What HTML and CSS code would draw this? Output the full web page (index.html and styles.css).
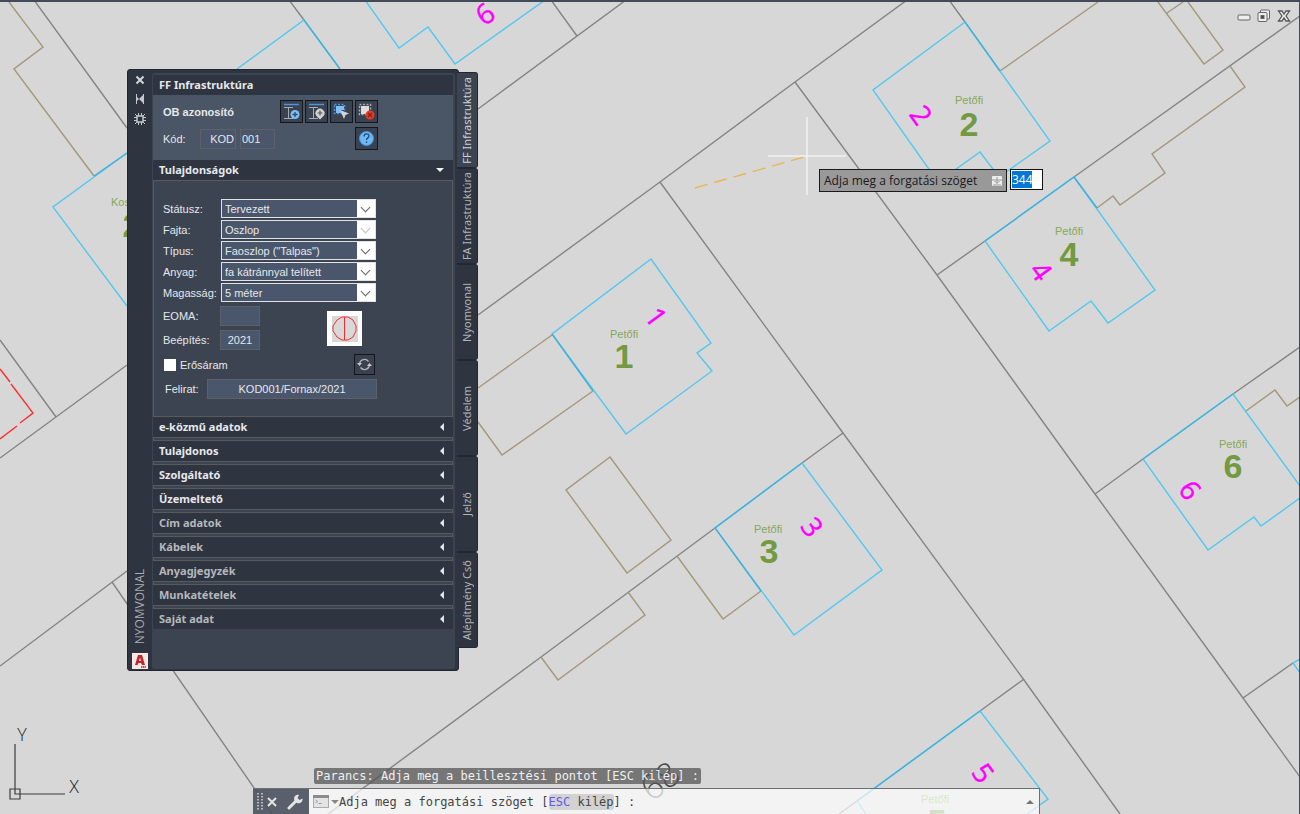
FILE: index.html
```html
<!DOCTYPE html>
<html lang="hu">
<head>
    <meta charset="UTF-8">
    <title>FF Infrastruktúra</title>
    <link rel="stylesheet" href="styles.css">
</head>
<body>

<main class="workspace">

    <!-- Map drawing -->
    <svg class="drawing" viewBox="0 0 1300 814" preserveAspectRatio="xMinYMin slice">
        <!-- Parcel borders -->
        <g class="parcel">
            <path d="M34 0L127 128M289 0L304 20M551 0L577 36M626 0L478 109"/>
            <path d="M0 340L56 417M0 458L127 365M0 666L127 571M112 582L272 814"/>
            <path d="M478 315L660 182L795 82L907 0M949 0L965 22"/>
            <path d="M660 182L843 433L1024 680L1120 814"/>
            <path d="M795 82L937 275L1095 494L1243 698L1300 777"/>
            <path d="M937 275L985 241M1074 177L1300 16"/>
            <path d="M843 433L802 463M715 528L541 657L328 814"/>
            <path d="M1095 494L1143 459M1233 394L1300 347"/>
            <path d="M1243 698L1293 663M1024 679L980 711M857 801L839 814"/>
        </g>

        <!-- Outbuildings -->
        <g class="annex">
            <path d="M9 2L43 47L14 69L94 176"/>
            <path d="M1000 71L1098 2M1158 2L1204 64L1223 50L1188 2M1167 13L1183 2"/>
            <path d="M1230 66L1245 87L1152 154L1165 173L1120 205L1113 196L1097 208"/>
            <path d="M1246 411L1275 390L1287 406L1300 397"/>
            <path d="M552 335L478 388M593 391L502 455L478 422"/>
            <path d="M610 457L566 490L627 573L671 540Z"/>
            <path d="M677 556L723 619L761 591M628 592L645 615L558 680L541 657"/>
        </g>

        <!-- Houses -->
        <g class="house">
            <path d="M127 153L53 207L127 306M237 69L304 20L340 69"/>
            <path d="M365 0L399 48L428 27L455 64L545 0"/>
            <path d="M965 22L873 90L938 182L980 152L999 177L1050 141Z"/>
            <path d="M1074 177L1155 290L1108 323L1091 301L1049 331L985 241Z"/>
            <path d="M1300 486L1233 394L1143 459L1208 550L1254 517L1261 526L1300 498"/>
            <path d="M651 259L711 343L697 353L712 371L626 434L552 334Z"/>
            <path d="M802 463L882 570L794 635L715 528Z"/>
            <path d="M866 814L857 801L980 711L1048 799L1027 814"/>
            <path d="M1300 659L1293 663L1300 673"/>
        </g>
        <g class="house-edge">
            <path d="M127 153L94 176M304 20L340 69M965 22L1000 71M985 241L1074 177L1097 208"/>
            <path d="M552 334L593 391M802 463L715 528L761 591M1143 459L1233 394M980 711L857 801"/>
        </g>
        <path class="warning" d="M0 369L10 382M11 384L33 413L20 423M17 426L0 439"/>

        <!-- Street names and house numbers -->
        <g class="street">
            <text x="111" y="206">Kossuth</text>
            <text x="955" y="104">Petőfi</text>
            <text x="1055" y="235">Petőfi</text>
            <text x="1219" y="448">Petőfi</text>
            <text x="610" y="338">Petőfi</text>
            <text x="754" y="533">Petőfi</text>
            <text x="921" y="803">Petőfi</text>
        </g>
        <g class="number">
            <text x="132" y="237">2</text>
            <text x="969" y="136">2</text>
            <text x="1069" y="266">4</text>
            <text x="1233" y="478">6</text>
            <text x="624" y="368">1</text>
            <text x="769" y="563">3</text>
            <text x="937" y="833">5</text>
        </g>
        <g class="lot">
            <text transform="translate(485 14) rotate(-36)" y="10">6</text>
            <text transform="translate(921 115) rotate(54)" y="10">2</text>
            <text transform="translate(1041 271) rotate(54)" y="10">4</text>
            <text transform="translate(1190 490) rotate(54)" y="10">6</text>
            <text transform="translate(656 317) rotate(54)" y="10">1</text>
            <text transform="translate(812 527) rotate(54)" y="10">3</text>
            <text transform="translate(983 773) rotate(54)" y="10">5</text>
        </g>
        <text class="parcel-number" transform="translate(660 781) rotate(-37)" y="12">68</text>

        <!-- Rotation rubber band and crosshair -->
        <path class="rubber" d="M695 188L804 157"/>
        <path class="crosshair" d="M768 156H846M807 117V195"/>

        <!-- UCS icon -->
        <path class="ucs" d="M10 789h10v10h-10zM15 744V794H65"/>
        <text class="ucs-label" x="22" y="741">Y</text>
        <text class="ucs-label" x="74" y="793">X</text>
    </svg>

    <!-- Drawing window buttons -->
    <div class="window-buttons">
        <button type="button" aria-label="Kis méret">
            <svg width="14" height="14" viewBox="0 0 14 14"><rect x="1" y="6" width="12" height="5" rx="1" fill="#eee" stroke="#666"/></svg>
        </button>
        <button type="button" aria-label="Előző méret">
            <svg width="14" height="14" viewBox="0 0 14 14" fill="#eee" stroke="#666"><rect x="3.500" y="1" width="9" height="9" rx="1"/><rect x="1" y="3.500" width="9" height="9" rx="1"/><rect x="4" y="6.500" width="3" height="3" fill="#444"/></svg>
        </button>
        <button type="button" aria-label="Bezárás">
            <svg width="14" height="14" viewBox="0 0 14 14"><path d="M1.500 2h3.500l2 3 2-3h3.500L9 7l3.500 5H9L7 9l-2 3H1.500L5 7z" fill="#eee" stroke="#555" stroke-width="1.300"/></svg>
        </button>
    </div>

    <!-- Dynamic input -->
    <div class="dynamic-input">
        <label class="prompt" for="angle">Adja meg a forgatási szöget
            <svg width="10" height="10" viewBox="0 0 10 10"><rect width="10" height="10" rx="1" fill="#eee"/><path d="M5 1v6M2.500 5L5 7.500 7.500 5M1 9h8M0 4h10" fill="none" stroke="#999"/></svg>
        </label>
        <input class="angle" id="angle" type="text" value="344">
    </div>

    <!-- Palette -->
    <aside class="palette">
        <div class="palette-window">
            <div class="palette-strip">
                <button type="button" aria-label="Bezárás">
                    <svg width="10" height="10" viewBox="0 0 10 10"><path d="M1.500 1.500l7 7M8.500 1.500l-7 7" stroke="#d4d6da" stroke-width="2"/></svg>
                </button>
                <button type="button" aria-label="Automatikus elrejtés">
                    <svg width="10" height="10" viewBox="0 0 10 10" fill="#c4c7cc"><path d="M1 0h1v10H1zM2 3l2 2-2 2zM8 0h1v10H8zM8 1v8L4 5z"/></svg>
                </button>
                <button type="button" aria-label="Tulajdonságok">
                    <svg width="12" height="12" viewBox="0 0 12 12" fill="none" stroke="#c4c7cc"><rect x="3" y="3" width="6" height="6" stroke-width="1.500"/><path d="M4.500 0v3M7.500 0v3M4.500 9v3M7.500 9v3M0 4.500h3M0 7.500h3M9 4.500h3M9 7.500h3M1 1l2 2M11 1L9 3M1 11l2-2M11 11L9 9"/></svg>
                </button>
                <span class="palette-name">NYOMVONAL</span>
                <svg class="app-logo" width="16" height="16" viewBox="0 0 16 16"><rect width="16" height="16" fill="#f7e9e6"/><path d="M3 12L6 2h4l3 10h-3l-1-2H6.500L5.500 12zM7 8h2L8 4.500z" fill="#c1272d" fill-rule="evenodd"/><path d="M9 14h5" stroke="#e04040" stroke-width="2" stroke-dasharray="1.300 .5"/></svg>
            </div>

            <div class="palette-content">
                <h2 class="section-title">FF Infrastruktúra</h2>
                <div class="identifier">
                    <div class="id-row">
                        <strong>OB azonosító</strong>
                        <div class="tools">
                            <button class="tool" type="button" aria-label="Oszlop hozzáadása">
                                <svg width="19" height="19" viewBox="0 0 19 19"><path d="M2 2.500h15" stroke="#4a96e0" stroke-width="1.500"/><path d="M2 5.500h9M2 16.500h9M6.500 5.500v11" stroke="#a8abb0" fill="none"/><circle cx="13" cy="12.500" r="4.500" fill="#7cc0f5"/><path d="M13 10v5M10.500 12.500h5" stroke="#2b4a68" stroke-width="1.300"/></svg>
                            </button>
                            <button class="tool" type="button" aria-label="Oszlop helye">
                                <svg width="19" height="19" viewBox="0 0 19 19"><path d="M2 2.500h15" stroke="#4a96e0" stroke-width="1.500"/><path d="M2 5.500h9M2 16.500h9M6.500 5.500v11" stroke="#a8abb0" fill="none"/><path d="M13 17.500l-3.500-3.500a4.500 4.500 0 1 1 7 0z" fill="#d4d4d4"/><path d="M13 8.500v5M10.500 11h5" stroke="#555" stroke-width="1.200"/></svg>
                            </button>
                            <button class="tool" type="button" aria-label="Kiválasztás">
                                <svg width="19" height="19" viewBox="0 0 19 19"><rect x="2.500" y="2.500" width="10" height="9" fill="none" stroke="#4a96e0" stroke-width="1.500" stroke-dasharray="2 1.500"/><path d="M4 4h8v4H9v3H4z" fill="#7cc0f5"/><path d="M8 8l9 3.500-3.500 1.500L12 17z" fill="#d4d4d4"/></svg>
                            </button>
                            <button class="tool" type="button" aria-label="Kiválasztás törlése">
                                <svg width="19" height="19" viewBox="0 0 19 19"><rect x="2.500" y="2.500" width="11" height="10" fill="none" stroke="#aaa" stroke-width="1.500" stroke-dasharray="2 1.500"/><path d="M4 4h8v5l-3 3H4z" fill="#dcdcdc"/><circle cx="13" cy="13" r="4.500" fill="#e03c28"/><path d="M11 11l4 4M15 11l-4 4" stroke="#8c2012" stroke-width="1.300"/></svg>
                            </button>
                        </div>
                    </div>
                    <div class="id-row">
                        <label for="code">Kód:</label>
                        <input class="field code" id="code" type="text" value="KOD">
                        <input class="field serial" type="text" value="001" aria-label="Sorszám">
                        <button class="tool help" type="button" aria-label="Súgó">
                            <svg width="19" height="19" viewBox="0 0 19 19"><circle cx="9.500" cy="9.500" r="7" fill="#6cb8f8" stroke="#4a90d8"/><path d="M7 7.500c0-3.500 5-3.500 5-.5 0 2-2.500 1.800-2.500 4M9.500 12.500v1.500" fill="none" stroke="#234a70" stroke-width="1.300"/></svg>
                        </button>
                    </div>
                </div>

                <h2 class="section-title">Tulajdonságok<i class="arrow-down"></i></h2>
                <form class="properties">
                    <div class="combo-rows">
                        <div class="combo-row">
                            <label for="status">Státusz:</label>
                            <span class="combo"><select id="status"><option>Tervezett</option></select></span>
                        </div>
                        <div class="combo-row">
                            <label for="kind">Fajta:</label>
                            <span class="combo locked"><select id="kind"><option>Oszlop</option></select></span>
                        </div>
                        <div class="combo-row">
                            <label for="type">Típus:</label>
                            <span class="combo"><select id="type"><option>Faoszlop ("Talpas")</option></select></span>
                        </div>
                        <div class="combo-row">
                            <label for="material">Anyag:</label>
                            <span class="combo"><select id="material"><option>fa kátránnyal telített</option></select></span>
                        </div>
                        <div class="combo-row">
                            <label for="height">Magasság:</label>
                            <span class="combo"><select id="height"><option>5 méter</option></select></span>
                        </div>
                    </div>

                    <div class="fields">
                        <div class="field-rows">
                            <div class="field-row">
                                <label for="eoma">EOMA:</label>
                                <input class="field" id="eoma" type="text">
                            </div>
                            <div class="field-row">
                                <label for="built">Beépítés:</label>
                                <input class="field" id="built" type="text" value="2021">
                            </div>
                        </div>
                        <svg class="symbol" width="35" height="35" viewBox="0 0 35 35"><rect width="35" height="35" fill="#fff"/><rect x="5" y="5" width="26" height="26" fill="#d8d8d8"/><path d="M15 6h6l5 3 3 6v5l-3 6-5 3h-6l-5-3-4-6v-5l4-6zM17.500 6v23" fill="none" stroke="#f03030"/></svg>
                    </div>

                    <div class="power-row">
                        <input class="check" id="power" type="checkbox">
                        <label for="power">Erősáram</label>
                        <button class="tool refresh" type="button" aria-label="Frissítés">
                            <svg width="15" height="15" viewBox="0 0 15 15"><path d="M2.500 7a5 5 0 0 1 9-2.500M12.500 8a5 5 0 0 1-9 2.500" fill="none" stroke="#b0b3b8" stroke-width="1.300"/><path d="M0 6h5L2.500 9zM10 9h5l-2.500-3z" fill="#c8cace"/></svg>
                        </button>
                    </div>

                    <div class="caption-row">
                        <label for="caption">Felirat:</label>
                        <input class="field" id="caption" type="text" value="KOD001/Fornax/2021">
                    </div>
                </form>

                <!-- Collapsed sections -->
                <h2 class="section-title">e-közmű adatok<i class="arrow-left"></i></h2>
                <div class="closed"></div>
                <h2 class="section-title">Tulajdonos<i class="arrow-left"></i></h2>
                <div class="closed"></div>
                <h2 class="section-title">Szolgáltató<i class="arrow-left"></i></h2>
                <div class="closed"></div>
                <h2 class="section-title">Üzemeltető<i class="arrow-left"></i></h2>
                <div class="closed"></div>
                <h2 class="section-title dim">Cím adatok<i class="arrow-left"></i></h2>
                <div class="closed"></div>
                <h2 class="section-title dim">Kábelek<i class="arrow-left"></i></h2>
                <div class="closed"></div>
                <h2 class="section-title dim">Anyagjegyzék<i class="arrow-left"></i></h2>
                <div class="closed"></div>
                <h2 class="section-title dim">Munkatételek<i class="arrow-left"></i></h2>
                <div class="closed"></div>
                <h2 class="section-title dim">Saját adat<i class="arrow-left"></i></h2>
            </div>
        </div>

        <nav class="palette-tabs">
            <button class="tab active" type="button"><span>FF Infrastruktúra</span></button>
            <button class="tab" type="button"><span>FA Infrastruktúra</span></button>
            <button class="tab" type="button"><span>Nyomvonal</span></button>
            <button class="tab" type="button"><span>Védelem</span></button>
            <button class="tab" type="button"><span>Jelző</span></button>
            <button class="tab" type="button"><span>Alépítmény Cső</span></button>
        </nav>
    </aside>

    <!-- Command line -->
    <div class="command">
        <div class="history">Parancs: Adja meg a beillesztési pontot [ESC kilép] :</div>
        <div class="command-bar">
            <div class="command-tools">
                <svg width="6" height="18" viewBox="0 0 6 18"><path d="M1 0v18M5 0v18" stroke="#d8d8d8" stroke-width="1.500" stroke-dasharray="1.500 1.500"/></svg>
                <button type="button" aria-label="Bezárás">
                    <svg width="10" height="10" viewBox="0 0 10 10"><path d="M1 1l8 8M9 1L1 9" stroke="#e4e4e4" stroke-width="2"/></svg>
                </button>
                <button type="button" aria-label="Testreszabás">
                    <svg width="16" height="16" viewBox="0 0 16 16"><path d="M2 14l7-7" stroke="#e4e4e4" stroke-width="3" stroke-linecap="round"/><path d="M12 1c-3-1-6 2-4.500 5.500L10 9c3 1 6-1 5.500-4.500L12.500 6 10.500 4z" fill="#e4e4e4"/></svg>
                </button>
            </div>
            <div class="command-line">
                <button type="button" aria-label="Legutóbbi parancsok">
                    <svg width="26" height="13" viewBox="0 0 26 13"><rect x=".5" y=".5" width="15" height="12" fill="#e4e4e4" stroke="#aaa"/><path d="M0 0h16v3H0z" fill="#8c8c8c"/><path d="M2.500 5l2 1.500-2 1.500M5.500 8.500h3" fill="none" stroke="#999"/><path d="M18 5h8l-4 4z" fill="#888"/></svg>
                </button>
                <span>Adja meg a forgatási szöget [<a class="option" href="#"><b>ESC</b> kilép</a>] :</span>
                <i class="arrow-up"></i>
            </div>
        </div>
    </div>
</main>

</body>
</html>
```
FILE: styles.css
```css
* {
    box-sizing: border-box;
}

body {
    margin: 0;
    font-family: "Liberation Sans", Arial, sans-serif;
    font-size: 11px;
    color: #e6e8eb;
}

button {
    display: flex;
    align-items: center;
    justify-content: center;
    padding: 0;
    border: 0;
    background: none;
    color: inherit;
}

.workspace {
    position: relative;
    height: 100vh;
    overflow: hidden;
    background: #d7d7d7;
    border-top: 2px solid #434b5a;
    border-right: 1px solid #434b5a;
}

/* Drawing */
.drawing {
    display: block;
    width: 100vw;
    height: 100vh;
    margin-top: -2px;
    fill: none;
}

.parcel {
    stroke: #848484;
}

.annex {
    stroke: #a4987a;
}

.house {
    stroke: #52c8f0;
}

.house-edge {
    stroke: #44b0d8;
}

.parcel,
.annex,
.house,
.house-edge {
    stroke-width: 1.4;
}

.warning {
    stroke: #ff2e2e;
    stroke-width: 1.4;
}

.street {
    font-size: 11px;
    fill: #86a859;
}

.number {
    font-size: 34px;
    font-weight: bold;
    fill: #739a41;
    text-anchor: middle;
}

.lot {
    font-family: "Open Sans", sans-serif;
    font-size: 28px;
    fill: #ff00ff;
    stroke: #ff00ff;
    stroke-width: 0.4;
    text-anchor: middle;
}

.parcel-number {
    font-family: "Open Sans", sans-serif;
    font-size: 34px;
    font-weight: 300;
    fill: #4a4a4a;
    text-anchor: middle;
}

.rubber {
    stroke: #e8b850;
    stroke-width: 1.4;
    stroke-dasharray: 13 7;
}

.crosshair {
    stroke: #f2f2f2;
    stroke-width: 1.5;
}

.ucs {
    stroke: #3c3c3c;
    stroke-width: 1.2;
}

.ucs-label {
    font-family: "Open Sans", sans-serif;
    font-size: 18px;
    font-weight: 300;
    fill: #222;
    text-anchor: middle;
}

.window-buttons {
    position: absolute;
    top: 7px;
    right: 8px;
    display: flex;
    gap: 6px;
}

/* Dynamic input */
.dynamic-input {
    position: absolute;
    top: 167px;
    left: 819px;
    display: flex;
    align-items: flex-start;
    gap: 3px;
    font-family: "Open Sans", sans-serif;
    font-size: 12px;
}

.prompt {
    display: flex;
    align-items: center;
    justify-content: space-between;
    width: 188px;
    height: 23px;
    padding: 0 4px;
    border: 1px solid #1a1a1a;
    background: #999;
    color: #1a1a1a;
}

.angle {
    width: 33px;
    height: 21px;
    padding: 0 1px;
    border: 1px solid #111;
    background: linear-gradient(#0078d7, #0078d7) 1px 1px / 20px 17px no-repeat #fff;
    color: #fff;
    font: inherit;
}

/* Palette */
.palette {
    position: absolute;
    top: 67px;
    left: 127px;
    display: flex;
    align-items: flex-start;
}

.palette-window {
    display: flex;
    width: 332px;
    min-height: 602px;
    padding: 3px 3px 1px 0;
    border: 1px solid #222733;
    border-radius: 3px;
    background: #2e3440;
}

.palette-strip {
    display: flex;
    flex-direction: column;
    align-items: center;
    gap: 9px;
    width: 24px;
    padding-top: 2px;
}

.palette-name {
    margin-top: auto;
    writing-mode: vertical-rl;
    transform: rotate(180deg);
    font-family: "Open Sans", sans-serif;
    font-size: 12px;
    line-height: 16px;
    color: #a9acb2;
}

.palette-content {
    flex: 1;
    padding: 2px 2px 0 1px;
    border-radius: 3px;
    background: #3c4452;
}

.section-title {
    display: flex;
    align-items: center;
    justify-content: space-between;
    height: 20px;
    margin: 0;
    padding: 0 9px 0 6px;
    background: #2e3440;
    font-family: "Noto Sans", sans-serif;
    font-size: 11px;
    font-weight: 700;
    line-height: 20px;
}

.dim {
    color: #b6b8bc;
}

.arrow-down {
    border: 4px solid transparent;
    border-top: 4px solid #f2f2f2;
    border-bottom: 0;
}

.arrow-left {
    border: 4px solid transparent;
    border-right: 4px solid #e6e6e6;
    border-left: 0;
}

.closed {
    height: 4px;
    border: 1px solid #585a5e;
}

.identifier {
    display: flex;
    flex-direction: column;
    gap: 4px;
    height: 65px;
    padding: 5px 75px 0 10px;
    background: #4a5565;
}

.id-row {
    display: flex;
    align-items: center;
    gap: 4px;
}

.id-row label {
    width: 33px;
}

.tools {
    display: flex;
    gap: 2px;
    margin-left: auto;
}

.tool {
    width: 23px;
    height: 23px;
    border: 1px solid #14171d;
    background: #3a4250;
}

.help {
    margin-left: auto;
}

.field {
    width: 40px;
    height: 20px;
    padding: 0 2px;
    border: 1px solid #5d6069;
    background: #4a566b;
    color: inherit;
    font: inherit;
    text-align: center;
}

.code {
    width: 36px;
    padding: 0 1px;
    text-align: right;
}

.serial {
    width: 35px;
    padding: 0 1px;
    text-align: left;
}

/* Properties form */
.properties {
    display: flex;
    flex-direction: column;
    gap: 4px;
    padding: 18px 75px 17px 9px;
    border: 1px solid #585a5e;
}

.combo-rows {
    display: flex;
    flex-direction: column;
    gap: 2px;
}

.combo-row,
.field-row,
.caption-row,
.power-row {
    display: flex;
    align-items: center;
}

.combo-row label {
    width: 58px;
    white-space: nowrap;
}

.combo {
    position: relative;
    display: flex;
    width: 155px;
    height: 19px;
    border: 1px solid #e2e2e2;
    background: #fff;
}

.combo select {
    flex: 1;
    appearance: none;
    margin: 0;
    padding: 0 19px 0 3px;
    border: 0;
    border-radius: 0;
    background: linear-gradient(90deg, #4a566b 135px, #fff 135px);
    color: inherit;
    font: inherit;
}

.combo::after {
    content: "";
    position: absolute;
    top: 4px;
    right: 6px;
    width: 6px;
    height: 6px;
    border: solid #666;
    border-width: 0 1px 1px 0;
    transform: rotate(45deg);
    pointer-events: none;
}

.locked::after {
    border-color: #c0c0c0;
}

.fields {
    display: flex;
    align-items: center;
    gap: 67px;
}

.field-rows {
    display: flex;
    flex-direction: column;
    gap: 4px;
}

.field-row label {
    width: 57px;
}

.power-row {
    gap: 4px;
}

.check {
    appearance: none;
    width: 12px;
    height: 12px;
    margin: 0 0 0 1px;
    background: #fff;
}

.refresh {
    width: 21px;
    height: 21px;
    margin: 0 2px 0 auto;
}

.caption-row {
    padding-left: 2px;
}

.caption-row label {
    width: 42px;
}

.caption-row .field {
    flex: 1;
}

/* Palette tabs */
.palette-tabs {
    margin: 3px 0 0 -2px;
}

.tab {
    width: 21px;
    height: 96px;
    border: 1px solid #222733;
    border-left: 0;
    border-radius: 0 3px 3px 0;
    background: #2e3440;
    font-family: "Noto Sans", sans-serif;
    font-size: 11px;
    color: #b0b3b8;
}

.tab span {
    writing-mode: vertical-rl;
    transform: rotate(180deg);
    line-height: 16px;
    white-space: nowrap;
}

.tab.active {
    background: #3c4452;
    color: #d0d2d6;
}

/* Command line */
.command {
    position: absolute;
    left: 253px;
    right: 259px;
    bottom: 0;
    display: flex;
    flex-direction: column;
    align-items: flex-start;
    gap: 4px;
    font-family: "DejaVu Sans Mono", monospace;
    font-size: 12px;
    white-space: pre;
}

.history {
    margin-left: 61px;
    height: 16px;
    padding: 0 2px;
    border-radius: 2px;
    background: rgba(85, 85, 85, 0.75);
    color: #f0f0f0;
    line-height: 16px;
}

.command-bar {
    display: flex;
    width: 100%;
    height: 26px;
    border: solid #6e6e78;
    border-width: 1px 1px 0 0;
}

.command-tools {
    display: flex;
    align-items: center;
    gap: 4px;
    width: 56px;
    padding-left: 4px;
    background: rgba(76, 82, 96, 0.9);
}

.command-tools button + button {
    margin-left: 6px;
}

.command-line {
    display: flex;
    flex: 1;
    align-items: center;
    padding: 0 5px 0 4px;
    background: rgba(255, 255, 255, 0.7);
    color: #444;
}

.option {
    padding: 1px 0;
    border-radius: 3px;
    background: #d2d2d2;
    color: inherit;
    text-decoration: none;
}

.option b {
    font-weight: normal;
    color: #5a5af0;
}

.arrow-up {
    margin-left: auto;
    border: 4px solid transparent;
    border-bottom: 4px solid #777;
    border-top: 0;
}
```
